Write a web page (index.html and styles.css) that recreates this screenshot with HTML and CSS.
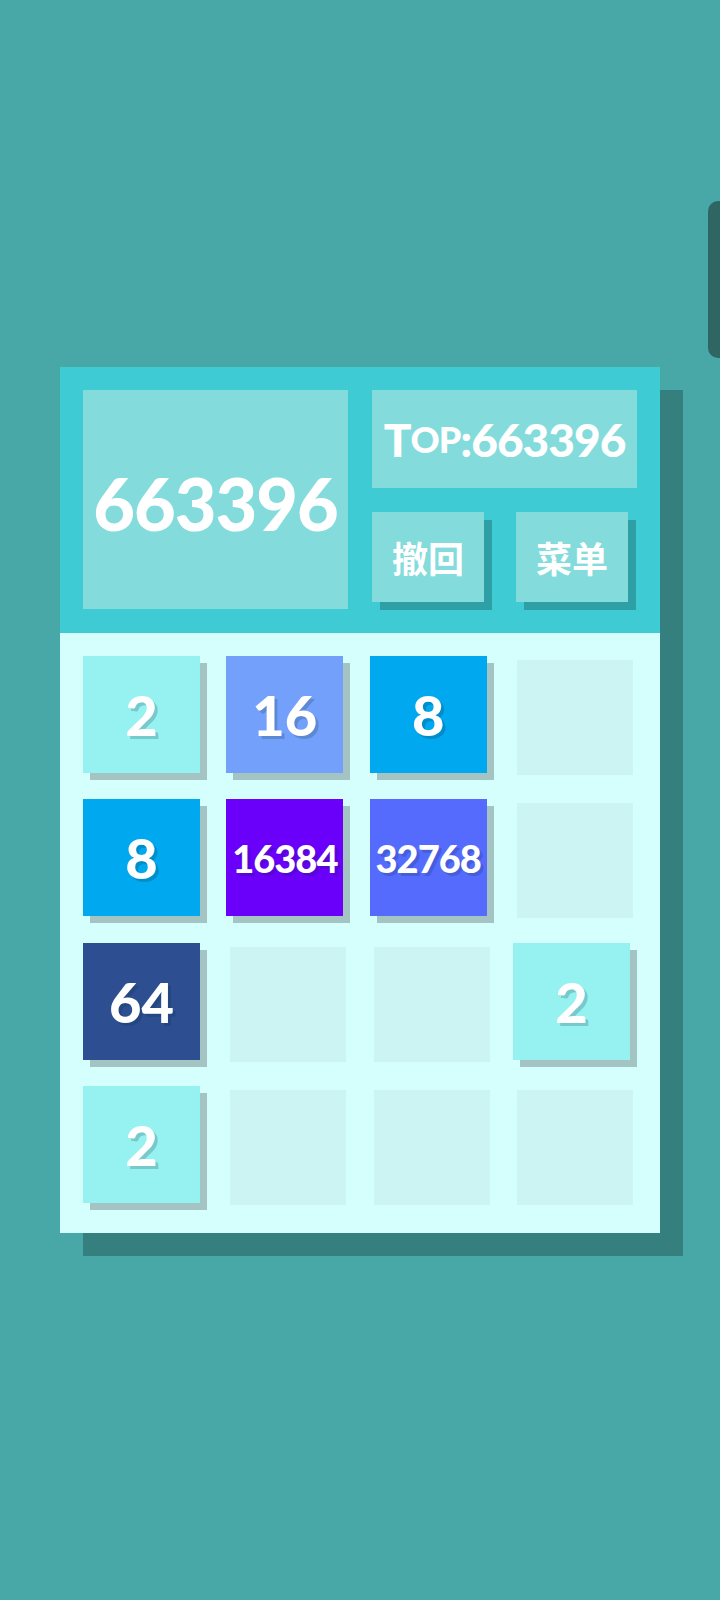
FILE: index.html
```html
<!DOCTYPE html>
<html lang="zh">
<head>
<meta charset="utf-8">
<title>2048</title>
<link rel="stylesheet" href="styles.css">
</head>
<body>
<div class="scroll-handle"></div>
<main class="game">
  <section class="header">
    <div class="score">663396</div>
    <div class="side">
      <div class="top"><span class="t">T</span><span class="op">op</span>:663396</div>
      <div class="buttons">
        <div class="btn">撤回</div>
        <div class="btn">菜单</div>
      </div>
    </div>
  </section>
  <section class="board">
    <div class="tile v2">2</div>
    <div class="tile v16">16</div>
    <div class="tile v8">8</div>
    <div class="cell"></div>

    <div class="tile v8">8</div>
    <div class="tile v16384 long">16384</div>
    <div class="tile v32768 long">32768</div>
    <div class="cell"></div>

    <div class="tile v64">64</div>
    <div class="cell"></div>
    <div class="cell"></div>
    <div class="tile v2">2</div>

    <div class="tile v2">2</div>
    <div class="cell"></div>
    <div class="cell"></div>
    <div class="cell"></div>
  </section>
</main>
</body>
</html>
```

FILE: styles.css
```css
html, body {
  margin: 0;
  padding: 0;
}
body {
  background: #47a8a7;
  width: 720px;
  height: 1600px;
  overflow: hidden;
  position: relative;
  font-family: "Lato", "Roboto", "Noto Sans CJK SC", sans-serif;
}
.scroll-handle {
  position: absolute;
  left: 708px;
  top: 201px;
  width: 30px;
  height: 157px;
  border-radius: 10px;
  background: #2f6563;
}
.game {
  width: 600px;
  margin: 367px 0 0 60px;
  box-shadow: 23px 23px 0 #357f7e;
}
.header {
  background: #3ecbd3;
  padding: 23px;
  display: flex;
  gap: 24px;
  height: 220px;
}
.score {
  width: 265px;
  height: 219px;
  background: #84dbdc;
  color: #fff;
  font-weight: 900;
  font-size: 72px;
  letter-spacing: -1px;
  display: flex;
  align-items: center;
  justify-content: center;
  padding-top: 6px;
  box-sizing: border-box;
}
.side {
  width: 265px;
  display: flex;
  flex-direction: column;
  gap: 24px;
}
.top {
  height: 98px;
  background: #84dbdc;
  color: #fff;
  font-weight: 900;
  font-size: 46px;
  letter-spacing: -1px;
  display: flex;
  align-items: center;
  justify-content: center;
}
.top .op {
  font-size: 36px;
  text-transform: uppercase;
}
.buttons {
  display: flex;
  gap: 32px;
}
.btn {
  width: 112px;
  height: 90px;
  background: #84dbdc;
  box-shadow: 8px 8px 0 #2e9fa5;
  color: #fff;
  font-family: "Noto Sans CJK SC", sans-serif;
  font-weight: 700;
  font-size: 36px;
  display: flex;
  align-items: center;
  justify-content: center;
}
.board {
  background: #d4fffd;
  padding: 23px 30px 30px 23px;
  display: grid;
  grid-template-columns: repeat(4, 117px);
  grid-auto-rows: 117px;
  gap: 26.33px;
}
.tile {
  width: 117px;
  height: 117px;
  box-shadow: 7px 7px 0 #a3c4c3;
  color: #fff;
  font-weight: 900;
  font-size: 56px;
  display: flex;
  align-items: center;
  justify-content: center;
  text-shadow: 3px 3px 0 rgba(0, 40, 60, 0.2);
}
.tile.long {
  font-size: 38px;
  letter-spacing: -1px;
}
.cell {
  width: 116px;
  height: 115px;
  margin: 4px 0 0 4px;
  background: #ccf4f2;
}
.v2 { background: #96f2f0; }
.v8 { background: #00a8ef; }
.v16 { background: #73a0fa; }
.v64 { background: #2d4f92; }
.v16384 { background: #6a00fa; }
.v32768 { background: #546bfe; }
```
